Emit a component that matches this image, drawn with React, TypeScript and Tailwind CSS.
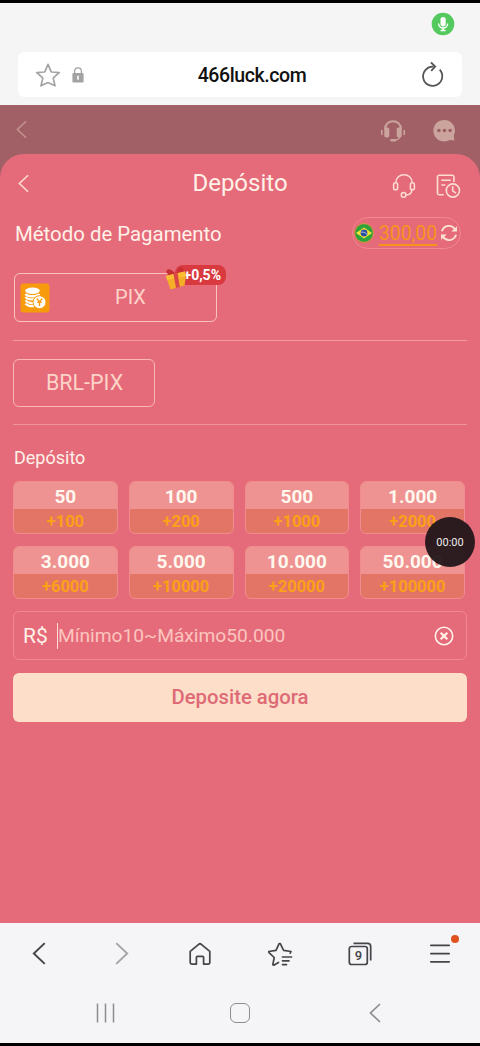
import React from 'react';

type Amount = {
  value: string;
  bonus: string;
};

const amounts: Amount[] = [
  { value: '50', bonus: '+100' },
  { value: '100', bonus: '+200' },
  { value: '500', bonus: '+1000' },
  { value: '1.000', bonus: '+2000' },
  { value: '3.000', bonus: '+6000' },
  { value: '5.000', bonus: '+10000' },
  { value: '10.000', bonus: '+20000' },
  { value: '50.000', bonus: '+100000' },
];

type IconProps = {
  className?: string;
};

const ChevronLeft: React.FC<IconProps> = ({ className }) => (
  <svg viewBox="0 0 12 20" fill="none" stroke="currentColor" strokeWidth="1.7" className={className}>
    <path d="M11 1 1.5 10 11 19" />
  </svg>
);

const StarIcon = () => (
  <svg viewBox="0 0 26 26" className="h-[26px] w-[26px]" fill="none" stroke="#a3a3a3" strokeWidth="1.7" strokeLinejoin="round">
    <path d="M13 2.4 16 9.4Q16.2 9.9 16.8 10L24.2 10.6 18.6 15.7Q18.2 16.1 18.3 16.6L20 23.8 13.6 20.8Q13 20.5 12.4 20.8L6 23.8 7.7 16.6Q7.8 16.1 7.4 15.7L1.8 10.6 9.2 10Q9.8 9.9 10 9.4Z" />
  </svg>
);

const LockIcon = () => (
  <svg viewBox="0 0 12 16" className="h-4 w-3">
    <path d="M2.6 7V4.2a3.4 3.4 0 0 1 6.8 0V7" fill="none" stroke="#a3a3a3" strokeWidth="1.3" />
    <rect x="0.4" y="6" width="11.2" height="9.6" rx="1" fill="#a3a3a3" />
    <path d="M6 8.8v4" stroke="#fff" strokeWidth="1.6" />
  </svg>
);

const ReloadIcon = () => (
  <svg viewBox="0 0 24 28" className="h-7 w-6" fill="none" stroke="#555" strokeWidth="1.8">
    <path d="M19.7 8.7A9.6 9.6 0 1 1 13.6 5.7" />
    <path d="M11 1.5 15.2 5.6 11.2 9.8" />
  </svg>
);

const MicBadge = () => (
  <svg viewBox="0 0 24 24" className="h-6 w-6">
    <circle cx="12" cy="12" r="11.3" fill="#54c95d" />
    <rect x="9.5" y="5" width="5.2" height="9.4" rx="2.6" fill="#fff" />
    <path d="M7.6 11.5a4.5 4.5 0 0 0 9 0M12.1 16v2.4M9.6 18.5h5" fill="none" stroke="#fff" strokeWidth="1.4" />
  </svg>
);

const HeadsetFilled = () => (
  <svg viewBox="0 0 26 24" className="h-6 w-[26px]" fill="none" stroke="#caa49d">
    <path d="M5 10.5C5-.5 21-.5 21 10.5" strokeWidth="2" />
    <rect x="4.3" y="8.5" width="5" height="10" rx="1.8" fill="#caa49d" stroke="none" />
    <rect x="16.7" y="8.5" width="5" height="10" rx="1.8" fill="#caa49d" stroke="none" />
    <path d="M1.8 11.5v4M24.2 11.5v4" strokeWidth="1.6" strokeLinecap="round" />
    <path d="M20 18c-1 2-3 3-6 3.2" strokeWidth="1.4" />
    <path d="M11.5 21.2h3.5" strokeWidth="2.4" strokeLinecap="round" />
  </svg>
);

const ChatFilled = () => (
  <svg viewBox="0 0 24 24" className="h-6 w-6">
    <path d="M12.3 .9a10.8 10.8 0 1 0 5.5 20l4.6.7-.6-5A10.8 10.8 0 0 0 12.3 .9Z" fill="#caa49d" />
    <circle cx="6.9" cy="11.5" r="1.8" fill="#9c5e65" />
    <circle cx="12.5" cy="11.5" r="1.8" fill="#9c5e65" />
    <circle cx="18.1" cy="11.5" r="1.8" fill="#9c5e65" />
  </svg>
);

const HeadsetIcon = () => (
  <svg viewBox="0 0 24 26" className="h-[26px] w-6" fill="none" stroke="#fddcd2" strokeWidth="1.5">
    <path d="M3.8 10C3.8-1 20.2-1 20.2 10" />
    <rect x="1.6" y="9.8" width="4" height="7" rx="1.9" />
    <rect x="18.4" y="9.8" width="4" height="7" rx="1.9" />
    <path d="M19.8 17c0 3.2-2 4.9-6 4.9" />
    <circle cx="11.6" cy="21.9" r="2.3" />
  </svg>
);

const RecordsIcon = () => (
  <svg viewBox="0 0 26 26" className="h-[26px] w-[26px]" fill="none" stroke="#fddcd2" strokeWidth="1.6">
    <path d="M8.7 21.7H4.2a1.7 1.7 0 0 1-1.7-1.7V3.9a1.7 1.7 0 0 1 1.7-1.7h13a1.7 1.7 0 0 1 1.7 1.7V9" />
    <path d="M6.3 7.3h9.5M6.3 12h4" />
    <circle cx="17.9" cy="17.5" r="6.6" />
    <path d="M17.7 13.3v4.5l3.3 2.4" />
  </svg>
);

const BrazilFlag = () => (
  <svg viewBox="0 0 20 20" className="h-5 w-5">
    <circle cx="10" cy="10" r="9.4" fill="#2fa33a" stroke="#e39243" strokeWidth="1" />
    <path d="M10 4.4 18 10 10 15.6 2 10Z" fill="#f5e13a" />
    <circle cx="10" cy="10" r="3.4" fill="#2b4fa3" />
    <path d="M7 9.2c2.3-.4 4.4.3 5.9 1.9" fill="none" stroke="#dbe6f5" strokeWidth="0.7" />
  </svg>
);

const RefreshIcon = () => (
  <svg viewBox="0 0 18 18" className="h-[18px] w-[18px]" fill="none" stroke="#fde3d3" strokeWidth="1.9">
    <path d="M1.9 7.2C4 .8 11.8.2 15 5.2M16.1 10.8C14 17.2 6.2 17.8 3 12.8" />
    <path d="M11.3 7.4H17V2.2ZM6.7 10.6H1V15.8Z" fill="#fde3d3" stroke="none" />
  </svg>
);

const CoinsIcon = () => (
  <svg viewBox="0 0 30 30" className="h-[30px] w-[30px]">
    <rect x="0.5" y="0.5" width="29" height="29" rx="3" fill="#f79a0b" />
    <ellipse cx="12.5" cy="7.8" rx="7.3" ry="3.2" fill="#fff" />
    <path
      d="M5.5 11c2 3 12 3 14 0M5.5 14.2c2 3 12 3 14 0M5.5 17.4c2 2.8 7 3 9 2.4M5.5 20.6c1.5 2.2 6 2.8 8.5 2.4"
      fill="none"
      stroke="#fff"
      strokeWidth="2.3"
    />
    <circle cx="19.5" cy="19.2" r="6.5" fill="#fff" stroke="#f79a0b" strokeWidth="1" />
    <path d="M16.8 15.5 19.5 19l2.7-3.5M19.5 19v4M17.3 19.3h4.4" fill="none" stroke="#f79a0b" strokeWidth="1.3" />
  </svg>
);

const GiftIcon = () => (
  <svg viewBox="0 0 24 24" className="h-6 w-6">
    <path d="M1.5 5.5C1 2 4.5 1.5 7 3.5L11.5 7 13.5 1.5C15.5-.5 19 .5 18.5 4L4 8.5Z" fill="#c72f33" />
    <path d="M.8 9 20 4.5 21 9 19.5 18.5 5.5 22.5Z" fill="#f5ae27" />
    <path d="M.8 9 8.5 7l1.200 4.200L2.300 13ZM13 6 20 4.500l.8 4.700-6.500 1.500Z" fill="#fbbd35" />
    <path d="M8.5 7 12.5 6 14.8 20 11 21Z" fill="#d9464a" />
  </svg>
);

const ClearIcon = () => (
  <svg viewBox="0 0 20 20" className="h-5 w-5" fill="none" stroke="#fff1e8">
    <circle cx="10" cy="10" r="8.7" strokeWidth="1.6" />
    <path d="M6.7 6.7l6.6 6.6M13.3 6.7l-6.6 6.6" strokeWidth="2.2" />
  </svg>
);

const HomeIcon = () => (
  <svg viewBox="0 0 24 24" className="h-6 w-6" fill="none" stroke="#444449" strokeWidth="1.7" strokeLinejoin="round">
    <path d="M2.2 9.3 10.7 2.3a2 2 0 0 1 2.6 0L21.8 9.3V20.5a1.6 1.6 0 0 1-1.6 1.6H15.6V15.3a1 1 0 0 0-1-1H9.4a1 1 0 0 0-1 1v6.8H3.8a1.6 1.6 0 0 1-1.6-1.6Z" />
  </svg>
);

const BookmarksIcon = () => (
  <svg viewBox="0 0 26 26" className="h-[26px] w-[26px]" fill="none" stroke="#444449" strokeWidth="1.7" strokeLinejoin="round" strokeLinecap="round">
    <path d="M23.2 12.2 24 10.5 16.6 9.3 13.3 2.7 12.1 2.7 9 9.3 1.8 10.5 2 11.7 7.2 16.5 5.8 23.8 6.8 24.2 11.5 21.5" />
    <path d="M15.5 16h9M15.5 19.8h6.5M15.5 23.6h4" />
  </svg>
);

const TabsIcon = () => (
  <div className="relative h-6 w-6">
    <svg viewBox="0 0 24 24" className="h-6 w-6" fill="none" stroke="#444449" strokeWidth="1.7">
      <rect x="1.3" y="4.5" width="18" height="18" rx="2.3" />
      <path d="M5.5 1.3H19.5a3.2 3.2 0 0 1 3.2 3.2V18.500" />
    </svg>
    <span className="absolute top-[6px] left-[1px] w-[19px] text-center text-[13px] leading-[15px] font-medium text-[#444449]">9</span>
  </div>
);

const BrowserBar = () => (
  <div className="h-[102px] bg-[#f5f5f5]">
    <div className="flex h-[49px] items-start justify-end pt-[9px] pr-[25px]">
      <MicBadge />
    </div>
    <div className="mx-[18px] flex h-[45px] items-center rounded-md bg-white pr-[18px] pl-[17px]">
      <div className="flex w-[79px] items-center gap-[11px]">
        <StarIcon />
        <LockIcon />
      </div>
      <div className="flex-1 pt-[3px] pl-px text-center text-[19.5px] leading-6 font-medium tracking-[-0.4px] text-[#111]">466luck.com</div>
      <div className="flex w-[55px] justify-end">
        <ReloadIcon />
      </div>
    </div>
  </div>
);

const AmountCard: React.FC<Amount> = ({ value, bonus }) => (
  <button className="flex h-[53px] flex-col overflow-hidden rounded-md border border-[#f18c8e] bg-[#e37567] font-bold">
    <span className="h-[27px] w-full bg-[#ee9391] text-center text-[19px] leading-[29px] text-[#fff8ef]">{value}</span>
    <span className="w-full text-center text-[16.5px] leading-[25px] text-[#fba018]">{bonus}</span>
  </button>
);

const DepositSheet = () => (
  <div className="h-[769px] rounded-t-[24px] bg-[#e56b7a] px-[13px]">
    <div className="flex h-[58px] items-center">
      <div className="w-[94px] pl-[5px]">
        <ChevronLeft className="h-[19px] w-[11px] text-[#fddcd2]" />
      </div>
      <h1 className="flex-1 text-center text-2xl text-[#fff1e8]">Depósito</h1>
      <div className="flex w-[94px] items-center justify-end gap-[19px] pt-[6px] pr-[6px]">
        <HeadsetIcon />
        <RecordsIcon />
      </div>
    </div>

    <div className="mt-[5px] flex h-8 items-center justify-between pr-[6px] pl-[2px]">
      <h2 className="pt-[2px] text-[20.4px] text-[#fff1e8]">Método de Pagamento</h2>
      <div className="flex h-8 w-[109px] items-center rounded-full border border-[#f08791] pl-[1px]">
        <BrazilFlag />
        <span className="mt-[3px] ml-[5px] border-b-2 border-[#f7941d] text-[19.3px] leading-[21px] text-[#f7941d]">300,00</span>
        <span className="ml-[3px]">
          <RefreshIcon />
        </span>
      </div>
    </div>

    <div className="relative mt-6 ml-[1px] flex h-[49px] w-[203px] items-center rounded-md border-[1.5px] border-[#fbc3bb] pl-[5px]">
      <CoinsIcon />
      <span className="flex-1 pr-[5px] pb-px text-center text-[20px] text-[#fdd3c8]">PIX</span>
      <div className="absolute -top-[9px] right-[-10px] flex h-[20px] w-[51px] items-center justify-end rounded-r-[8px] rounded-tl-[8px] bg-[#d93a40] pr-[5px] text-[14px] leading-none font-bold text-white">
        +0,5%
      </div>
      <div className="absolute -top-[7px] left-[150px]">
        <GiftIcon />
      </div>
    </div>

    <div className="mt-[18px] h-px bg-[#f39a9f]" />
    <div className="mt-[18px] flex h-12 w-[142px] items-center justify-center rounded-md border border-[#fbb9b2] pl-px text-[21.5px] text-[#fdd3c8]">
      BRL-PIX
    </div>
    <div className="mt-[17px] h-px bg-[#f0929a]" />

    <div className="flex h-14 items-center pt-[9px] pl-px text-lg text-[#fff1e8]">Depósito</div>

    <div className="grid grid-cols-4 gap-x-[11px] gap-y-3 pr-[2px]">
      {amounts.map((item) => (
        <AmountCard key={item.value} value={item.value} bonus={item.bonus} />
      ))}
    </div>

    <div className="mt-3 flex h-[49px] items-center rounded-md border border-[#f08791] pr-3 pl-[9px]">
      <span className="w-[34px] pt-[2px] text-[21px] text-[#fff1e8]">R$</span>
      <span className="h-[26px] w-px bg-[#fddcd2]" />
      <span className="flex-1 pt-[2px] text-[19.2px] text-[#fcc5bf]">Mínimo10~Máximo50.000</span>
      <ClearIcon />
    </div>

    <button className="mt-[13px] h-[49px] w-full rounded-md bg-[#fcdec9] text-[20.3px] font-medium text-[#dd6a75]">Deposite agora</button>
  </div>
);

const BottomBar = () => (
  <div className="flex h-[120px] flex-col bg-[#f5f5f8]">
    <div className="grid h-[61px] grid-cols-6 items-center">
      <div className="flex justify-center pr-[3px]">
        <ChevronLeft className="h-[23px] w-[14px] text-[#444449]" />
      </div>
      <div className="flex justify-center pl-[3px]">
        <ChevronLeft className="h-[23px] w-[14px] rotate-180 text-[#a5a5aa]" />
      </div>
      <div className="flex justify-center">
        <HomeIcon />
      </div>
      <div className="flex justify-center">
        <BookmarksIcon />
      </div>
      <div className="flex justify-center">
        <TabsIcon />
      </div>
      <div className="relative flex justify-center">
        <svg viewBox="0 0 20 20" className="h-5 w-5" stroke="#444449" strokeWidth="1.7" strokeLinecap="round">
          <path d="M.8 1.3h18.4M.8 9.6h18.4M.8 17.9h18.4" />
        </svg>
        <span className="absolute -top-[9px] right-[21px] h-2 w-2 rounded-full bg-[#e2521d]" />
      </div>
    </div>
    <div className="flex h-[58px] items-center justify-between pr-[99px] pl-[96px]">
      <svg viewBox="0 0 20 20" className="h-5 w-5" stroke="#8d8d91" strokeWidth="1.5">
        <path d="M1.5.5v19M9.5.5v19M17.5.5v19" />
      </svg>
      <span className="-ml-[5px] h-5 w-5 rounded-md border-[1.5px] border-[#8d8d91]" />
      <ChevronLeft className="h-5 w-3 text-[#8d8d91]" />
    </div>
  </div>
);

const App = () => {
  return (
    <div className="relative flex h-[1046px] w-[480px] flex-col overflow-hidden bg-black font-[Roboto,'Liberation_Sans',sans-serif]">
      <div className="h-[3px]" />
      <BrowserBar />
      <div className="bg-[#a15f66]">
        <div className="flex h-[49px] items-center justify-between pr-6 pl-4">
          <ChevronLeft className="h-[19px] w-[11px] text-[#c4938f]" />
          <div className="flex items-center gap-[26px] pt-[2px]">
            <HeadsetFilled />
            <ChatFilled />
          </div>
        </div>
        <DepositSheet />
      </div>
      <BottomBar />
      {/* floating screen recorder timer */}
      <div className="absolute top-[517px] left-[425px] flex h-[50px] w-[50px] items-center justify-center rounded-full bg-[#22161a]/95 pt-[2px] text-[11px] text-[#eee]">
        00:00
      </div>
    </div>
  );
};

export default App;
